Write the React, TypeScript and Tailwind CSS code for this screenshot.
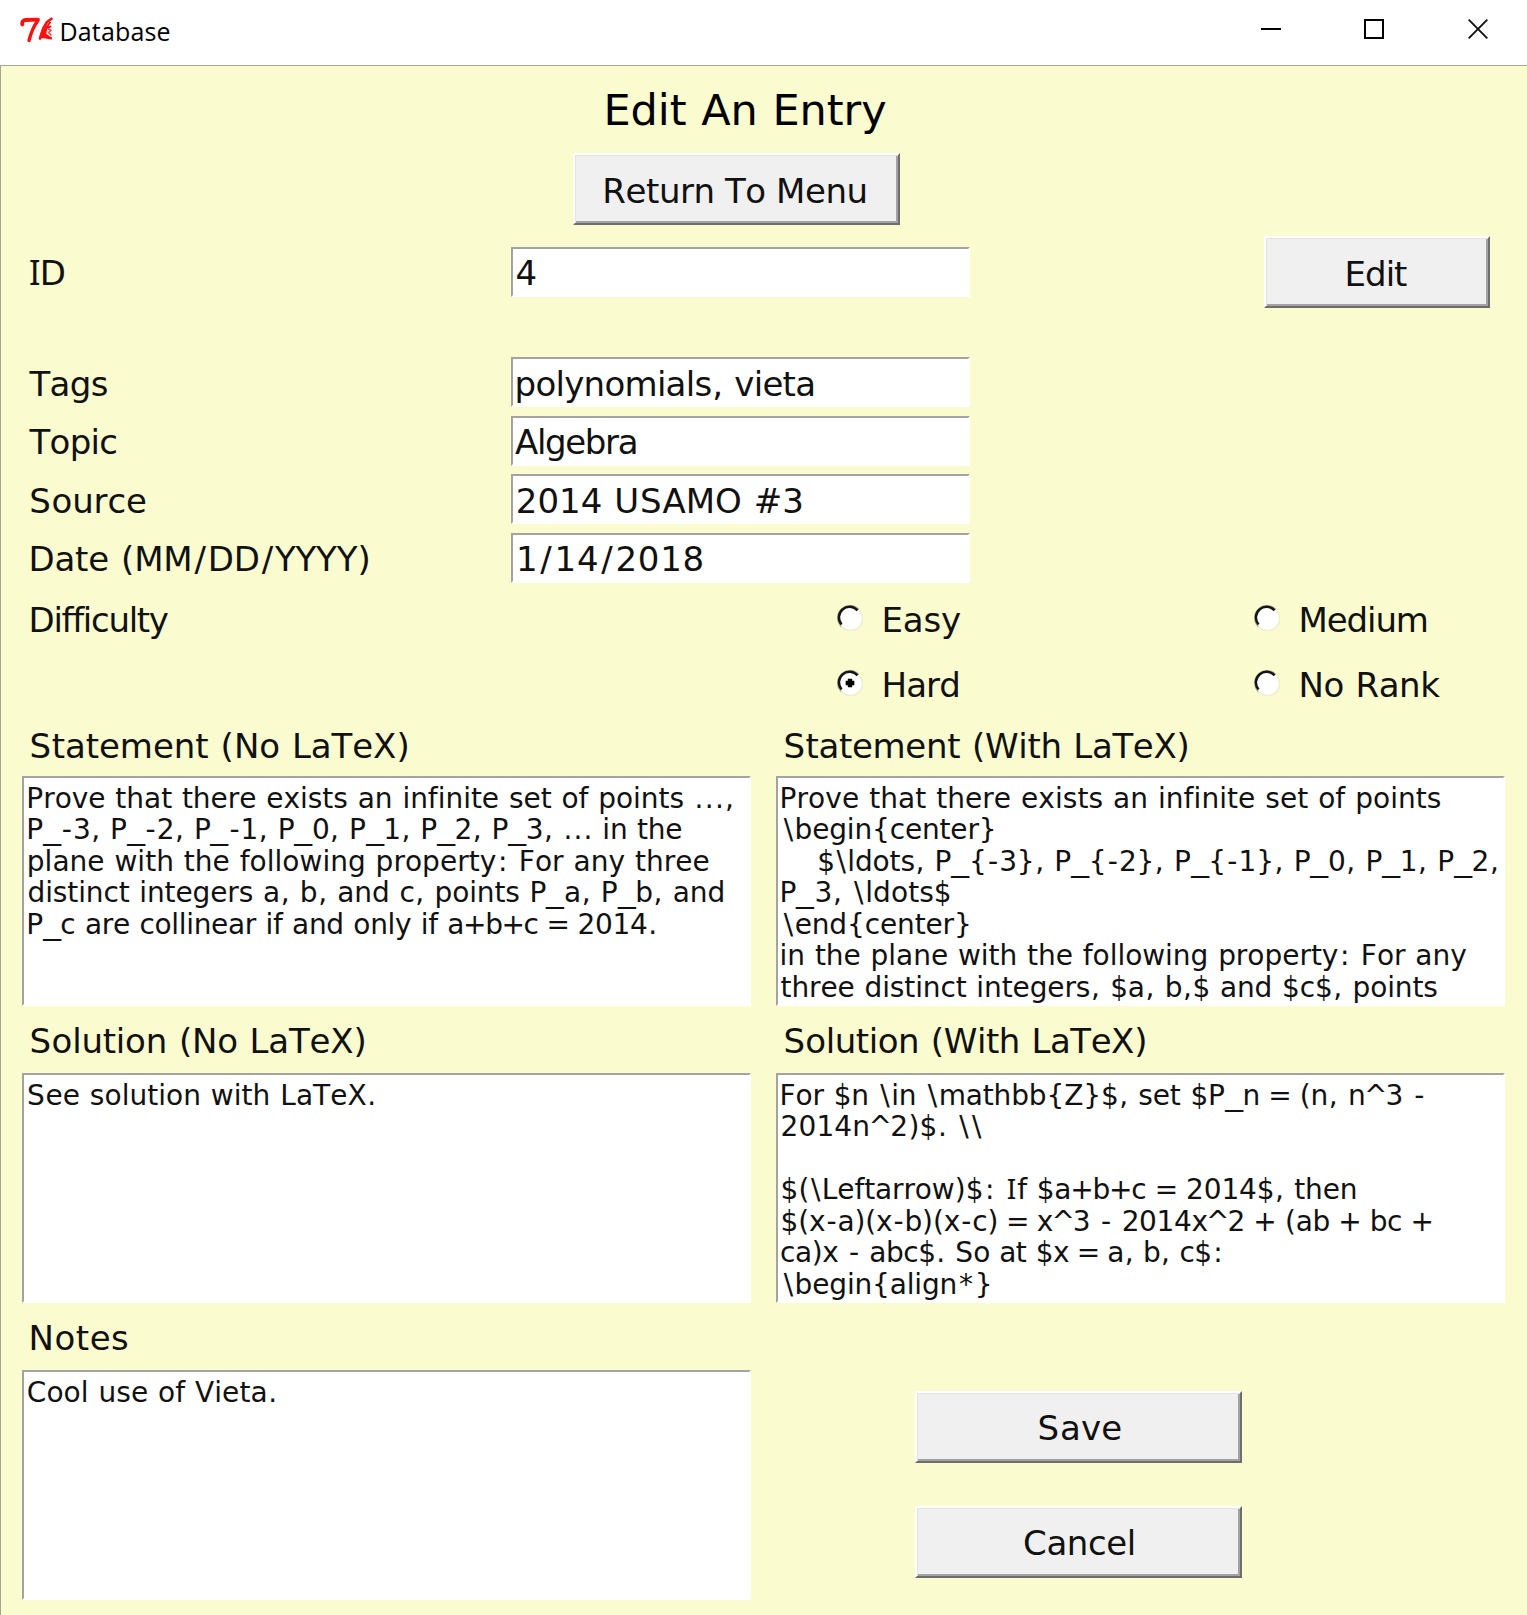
import { Fragment } from 'react';
import type { ReactNode } from 'react';

type Line = { text: string; cls: string };

/** Side space of the glyphs that the form's typeface sets wider or narrower. */
const glyphs: Record<string, string> = {
  '.': 'px-[0.023em]',
  ',': 'px-[0.023em]',
  '-': 'px-[0.047em]',
  _: 'inline-block scale-x-[1.27] mx-[0.068em]',
  '(': 'px-[0.005em]',
  ')': 'px-[0.005em]',
  ':': 'px-[0.058em]',
  '\\': 'px-[0.058em]',
  '/': 'px-[0.058em]',
  '*': 'px-[0.068em]',
  '+': '-mx-[0.040em]',
  '=': '-mx-[0.060em]',
  '^': '-mx-[0.060em]',
  S: 'px-[0.024em]',
  I: "font-['Noto_Sans'] leading-none px-[0.041em]",
};

function Text({ children }: { children: string }) {
  return (
    <>
      {children.split(/([.,\-_():\\/*+=^SI])/).map((part, i) =>
        glyphs[part] ? (
          <span key={i} className={glyphs[part]}>
            {part}
          </span>
        ) : (
          <Fragment key={i}>{part}</Fragment>
        ),
      )}
    </>
  );
}

function TkLogo() {
  return (
    <svg className="h-[26px] w-[34px]" viewBox="0 0 34 26" fill="none" stroke="#ff1010" strokeLinecap="round" strokeLinejoin="round">
      <path d="M2.300 7.500 C1.800 5 3 3.300 5.500 3 L18 2.600" strokeWidth="3.800" />
      <path d="M17.600 4 C14 8.500 11.500 14 9 23.500" strokeWidth="3.400" />
      <path d="M31.500 1.700 L27 5 L23.500 11 L20 21.500" strokeWidth="2.600" />
      <path d="M30 5.500 L25.500 11.500 L30.500 9.500" strokeWidth="2" />
      <path d="M20.500 20 L22.500 13.500 L26 12.500 L25 17.500 L31 21.300 L26 20.300 Z" strokeWidth="2.200" fill="#ff1010" />
      <path d="M28.500 12 L31 13.500 L28.500 15.500 L31 18" strokeWidth="1.600" stroke="#ff3a3a" />
    </svg>
  );
}

function TitleBar() {
  return (
    <header className="flex h-[65px] items-start bg-white pl-5 pr-[39px]">
      <div className="mt-[17px]">
        <TkLogo />
      </div>
      <div className="mt-[13px] ml-[5.500px] font-['Open_Sans'] text-[25px] leading-[36px] tracking-[0.150px] text-black">
        Database
      </div>
      <div className="mt-[19px] ml-auto flex gap-[83px]">
        <svg className="h-5 w-5" viewBox="0 0 20 20">
          <rect x="0" y="9" width="20" height="2" fill="#000" />
        </svg>
        <svg className="h-5 w-5" viewBox="0 0 20 20">
          <rect x="1" y="1" width="18" height="18" fill="none" stroke="#000" strokeWidth="2" />
        </svg>
        <svg className="ml-[1px] h-5 w-5" viewBox="0 0 20 20">
          <path d="M0.700 0.700 L19.300 19.300 M19.300 0.700 L0.700 19.300" stroke="#111" strokeWidth="1.900" />
        </svg>
      </div>
    </header>
  );
}

function Button({ cls, children }: { cls: string; children: string }) {
  return (
    <button
      className={`block h-[72px] shrink-0 border-2 border-t-white border-r-[#6d6d6d] border-b-[#6d6d6d] border-l-white bg-[#f0f0f0] pt-[3px] text-center leading-[40px] shadow-[inset_1px_1px_0_#e3e3e3,inset_-2px_-2px_0_#a3a3a3] ${cls}`}
    >
      <Text>{children}</Text>
    </button>
  );
}

function Entry({ cls, children }: { cls: string; children: string }) {
  return (
    <div className="h-[50px] w-[459px] border-2 border-t-[#a3a3a3] border-r-white border-b-white border-l-[#a3a3a3] bg-white pt-[4.300px]">
      <div className={`leading-[40px] whitespace-pre ${cls}`}>
        <Text>{children}</Text>
      </div>
    </div>
  );
}

function Field({ label, labelCls, value, valueCls }: { label: string; labelCls: string; value: string; valueCls: string }) {
  return (
    <div className="flex h-[58.600px]">
      <div className={`w-[510px] pt-[6.300px] leading-[40px] ${labelCls}`}>
        <Text>{label}</Text>
      </div>
      <Entry cls={valueCls}>{value}</Entry>
    </div>
  );
}

function Radio({ checked }: { checked?: boolean }) {
  return (
    <svg className="mt-[5px] h-[26px] w-[26px]" viewBox="0 0 12 12" preserveAspectRatio="none" fill="none">
      <circle cx="6" cy="6" r="5.400" fill="#fff" />
      <path d="M10.400 2.600 A5.500 5.500 0 0 1 2.400 10.200" stroke="#eeeed2" strokeWidth="0.700" />
      <path d="M2 10 A5.650 5.650 0 0 1 10 2" stroke="#b4b49c" strokeWidth="0.700" />
      <path d="M2.100 9 A4.900 4.900 0 0 1 9.500 2.500" stroke="#161616" strokeWidth="1.150" />
      {checked && <path d="M5 4h2v1h1v2h-1v1h-2v-1h-1v-2h1z" fill="#000" />}
    </svg>
  );
}

function Option({ cls, label, checked }: { cls: string; label: string; checked?: boolean }) {
  return (
    <div className="flex gap-[18.500px] leading-[40px]">
      <Radio checked={checked} />
      <span className={cls}>{label}</span>
    </div>
  );
}

function TextArea({ lines, inset }: { lines: Line[]; inset: string }) {
  return (
    <div
      className={`h-[230px] w-[729px] overflow-hidden border-2 border-t-[#a3a3a3] border-r-white border-b-white border-l-[#a3a3a3] bg-white pt-[5px] text-[28px] leading-[31.500px] [word-spacing:0.950px] ${inset}`}
    >
      {lines.map((l, i) => (
        <div key={i} className={`h-[31.500px] whitespace-pre ${l.cls}`}>
          <Text>{l.text}</Text>
        </div>
      ))}
    </div>
  );
}

type PanelProps = { title: string; titleCls: string; areaGap: string; inset: string; lines: Line[] };

function Panel({ title, titleCls, areaGap, inset, lines }: PanelProps) {
  return (
    <section className="w-[729px]">
      <h2 className={`pl-[6.600px] leading-[40px] whitespace-pre ${titleCls}`}>
        <Text>{title}</Text>
      </h2>
      <div className={areaGap}>
        <TextArea lines={lines} inset={inset} />
      </div>
    </section>
  );
}

const statementPlain: Line[] = [
  { text: 'Prove that there exists an infinite set of points ...,', cls: 'tracking-[-0.025px]' },
  { text: 'P_-3, P_-2, P_-1, P_0, P_1, P_2, P_3, ... in the', cls: 'tracking-[-0.245px]' },
  { text: 'plane with the following property: For any three', cls: 'pl-[0.500px] tracking-[0.020px]' },
  { text: 'distinct integers a, b, and c, points P_a, P_b, and', cls: 'pl-[1.200px] tracking-[-0.115px]' },
  { text: 'P_c are collinear if and only if a+b+c = 2014.', cls: 'tracking-[-0.320px]' },
];
const statementLatex: Line[] = [
  { text: 'Prove that there exists an infinite set of points', cls: 'tracking-[0.060px]' },
  { text: '\\begin{center}', cls: 'pl-[2.500px] tracking-[-0.170px]' },
  { text: '$\\ldots, P_{-3}, P_{-2}, P_{-1}, P_0, P_1, P_2,', cls: 'pl-[37.600px] tracking-[-0.155px]' },
  { text: 'P_3, \\ldots$', cls: 'tracking-[0.070px]' },
  { text: '\\end{center}', cls: 'pl-[2.500px] tracking-[-0.130px]' },
  { text: 'in the plane with the following property: For any', cls: 'tracking-[-0.030px]' },
  { text: 'three distinct integers, $a, b,$ and $c$, points', cls: 'pl-[1px] tracking-[-0.110px]' },
];
const solutionPlain: Line[] = [{ text: 'See solution with LaTeX.', cls: 'tracking-[0.030px]' }];
const solutionLatex: Line[] = [
  { text: 'For $n \\in \\mathbb{Z}$, set $P_n = (n, n^3 -', cls: 'tracking-[-0.140px]' },
  { text: '2014n^2)$. \\\\', cls: 'pl-[1px] tracking-[0.100px]' },
  { text: '', cls: '' },
  { text: '$(\\Leftarrow)$: If $a+b+c = 2014$, then', cls: 'pl-[1px] tracking-[-0.130px]' },
  { text: '$(x-a)(x-b)(x-c) = x^3 - 2014x^2 + (ab + bc +', cls: 'pl-[1px] tracking-[-0.360px]' },
  { text: 'ca)x - abc$. So at $x = a, b, c$:', cls: 'pl-[0.500px] tracking-[-0.500px]' },
  { text: '\\begin{align*}', cls: 'pl-[2.500px] tracking-[-0.160px]' },
];
const notes: Line[] = [{ text: 'Cool use of Vieta.', cls: 'pl-[0.500px] tracking-[0.050px]' }];

function Group({ cls, children }: { cls: string; children: ReactNode }) {
  return <div className={`flex pl-[21px] ${cls}`}>{children}</div>;
}

export default function App() {
  return (
    <div className="flex h-[1615px] w-[1527px] flex-col overflow-hidden bg-white">
      <TitleBar />
      <main className="flex-1 border-t border-l border-[#a7a791] bg-[#fafbcf] font-['DejaVu_Sans',sans-serif] text-[34px] text-[#111] [font-kerning:none] [word-spacing:1.150px]">
        <h1 className="mt-[19px] pl-[602.500px] text-[43px] leading-[50px] tracking-[-0.070px] text-black">Edit An Entry</h1>
        <div className="mt-[18px] pl-[572px]">
          <Button cls="w-[327px] pr-[3px] tracking-[-0.440px]">Return To Menu</Button>
        </div>

        <div className="mt-[11px] flex h-[72px]">
          <div className="w-[510px] pt-[17px] pl-[26.500px] leading-[40px] tracking-[-2px]">
            <Text>ID</Text>
          </div>
          <div className="pt-[11px]">
            <Entry cls="pl-[2.600px]">4</Entry>
          </div>
          <div className="ml-[294px]">
            <Button cls="w-[226px] pr-[3px] tracking-[-1px]">Edit</Button>
          </div>
        </div>

        <div className="mt-[49.300px]">
          <Field label="Tags" labelCls="pl-[28.500px] tracking-[-0.660px]" value="polynomials, vieta" valueCls="pl-[1.600px] tracking-[-0.730px]" />
          <Field label="Topic" labelCls="pl-[28.500px] tracking-[-0.700px]" value="Algebra" valueCls="pl-[2px] tracking-[-1.350px]" />
          <Field label="Source" labelCls="pl-[27.400px] tracking-[-0.120px]" value="2014 USAMO #3" valueCls="pl-[2.800px] tracking-[0px]" />
          <Field label="Date (MM/DD/YYYY)" labelCls="pl-[27.400px] tracking-[-0.180px]" value="1/14/2018" valueCls="pl-[3px] tracking-[0.750px]" />
        </div>

        <div className="mt-[8.300px] flex h-[105px]">
          <div className="w-[836px] pl-[27.500px] leading-[40px] tracking-[-1.300px]">Difficulty</div>
          <div className="flex w-[417px] flex-col gap-[25px]">
            <Option label="Easy" cls="tracking-[-0.200px]" />
            <Option label="Hard" cls="tracking-[-0.900px]" checked />
          </div>
          <div className="flex flex-col gap-[25px]">
            <Option label="Medium" cls="tracking-[-1.100px]" />
            <Option label="No Rank" cls="tracking-[-0.420px]" />
          </div>
        </div>

        <Group cls="mt-[21px] gap-[25px]">
          <Panel title="Statement (No LaTeX)" titleCls="tracking-[-0.070px]" areaGap="mt-[10px]" inset="pl-[2.300px]" lines={statementPlain} />
          <Panel title="Statement (With LaTeX)" titleCls="tracking-[-0.330px]" areaGap="mt-[10px]" inset="pl-[1.600px]" lines={statementLatex} />
        </Group>
        <Group cls="mt-[15px] gap-[25px]">
          <Panel title="Solution (No LaTeX)" titleCls="tracking-[-0.220px]" areaGap="mt-[12px]" inset="pl-[2.300px]" lines={solutionPlain} />
          <Panel title="Solution (With LaTeX)" titleCls="tracking-[-0.450px]" areaGap="mt-[12px]" inset="pl-[1.600px]" lines={solutionLatex} />
        </Group>
        <Group cls="mt-[15px]">
          <Panel title="Notes" titleCls="tracking-[0.500px]" areaGap="mt-[12px]" inset="pl-[2.300px]" lines={notes} />
          <div className="flex flex-col gap-[43px] pt-[73px] pl-[164px]">
            <Button cls="w-[327px] pl-[2px] tracking-[0.100px]">Save</Button>
            <Button cls="w-[327px] pl-[2px] tracking-[-0.400px]">Cancel</Button>
          </div>
        </Group>
      </main>
    </div>
  );
}
